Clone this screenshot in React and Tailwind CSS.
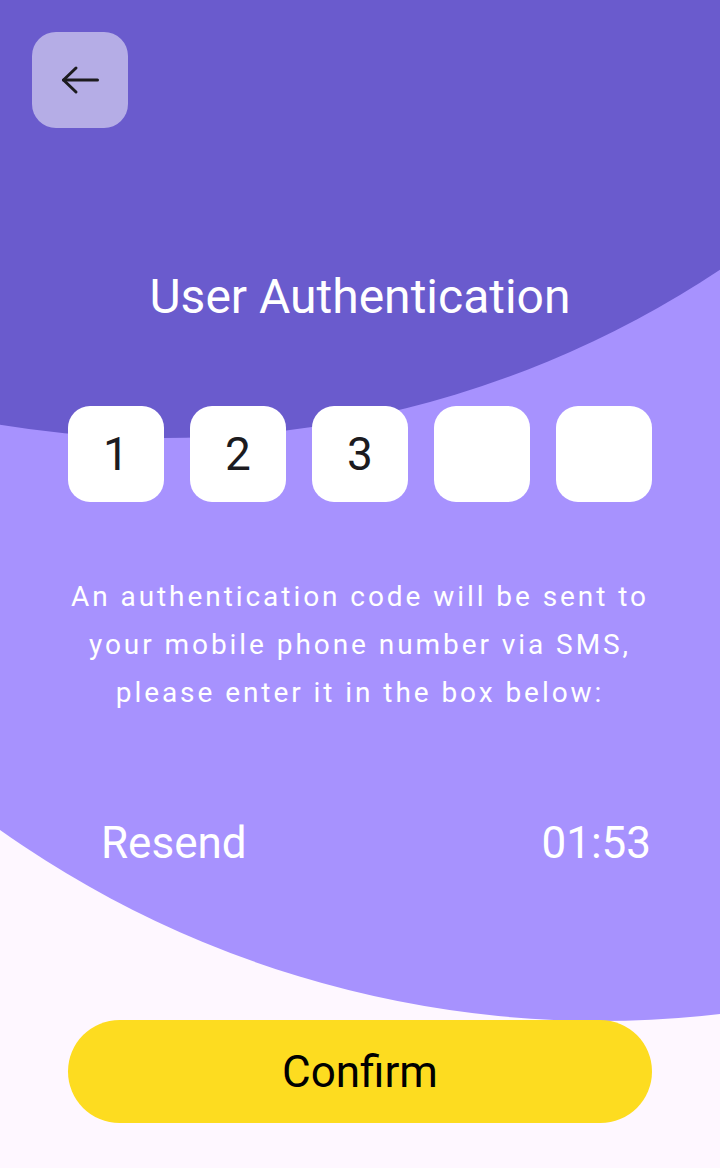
import React from 'react';

const digits = ['1', '2', '3', '', ''];

const BackArrow = () => (
  <svg width="40" height="30" viewBox="0 0 40 30" fill="none" stroke="#1c1b1f" strokeWidth="3" strokeLinecap="round" strokeLinejoin="round">
    <path d="M37.5 15H3.5" />
    <path d="M16 3 3.5 15 16 27" />
  </svg>
);

export default function App() {
  return (
    <div
      className="relative w-[720px] h-[1168px] overflow-hidden bg-[#fef7ff]"
      style={{ fontFamily: 'Roboto, "Noto Sans", sans-serif' }}
    >
      {/* background blobs */}
      <div className="absolute left-[-438px] top-[-1055px] w-[2076px] h-[2076px] rounded-full bg-[#a792fe]" />
      <div className="absolute left-[-843px] top-[-1574px] w-[2012px] h-[2012px] rounded-full bg-[#6a5bcd]" />

      <div className="relative z-10 flex flex-col">
        <button className="mt-8 ml-8 w-24 h-24 rounded-3xl bg-white/50 flex items-center justify-center">
          <BackArrow />
        </button>

        <h1 className="mt-[141px] text-center text-white text-[48px] leading-[56px] font-normal">
          User Authentication
        </h1>

        <div className="mt-[81px] px-[68px] flex justify-between">
          {digits.map((d, i) => (
            <div
              key={i}
              className="w-24 h-24 rounded-[22px] bg-white flex items-center justify-center text-[46px] text-[#1c1b1f]"
            >
              {d}
            </div>
          ))}
        </div>

        <p className="mt-[71px] text-center text-white text-[28px] leading-[48px] tracking-[0.105em]">
          An authentication code will be sent to
          <br />
          your mobile phone number via SMS,
          <br />
          please enter it in the box below:
        </p>

        <div className="mt-[102px] pl-[101px] pr-[69px] flex justify-between text-white text-[44px] leading-[48px]">
          <span>Resend</span>
          <span>01:53</span>
        </div>

        <div className="mt-[153px] px-[68px]">
          <button className="w-full h-[103px] rounded-full bg-[#fddc20] text-black text-[44px]">
            Confirm
          </button>
        </div>
      </div>
    </div>
  );
}
